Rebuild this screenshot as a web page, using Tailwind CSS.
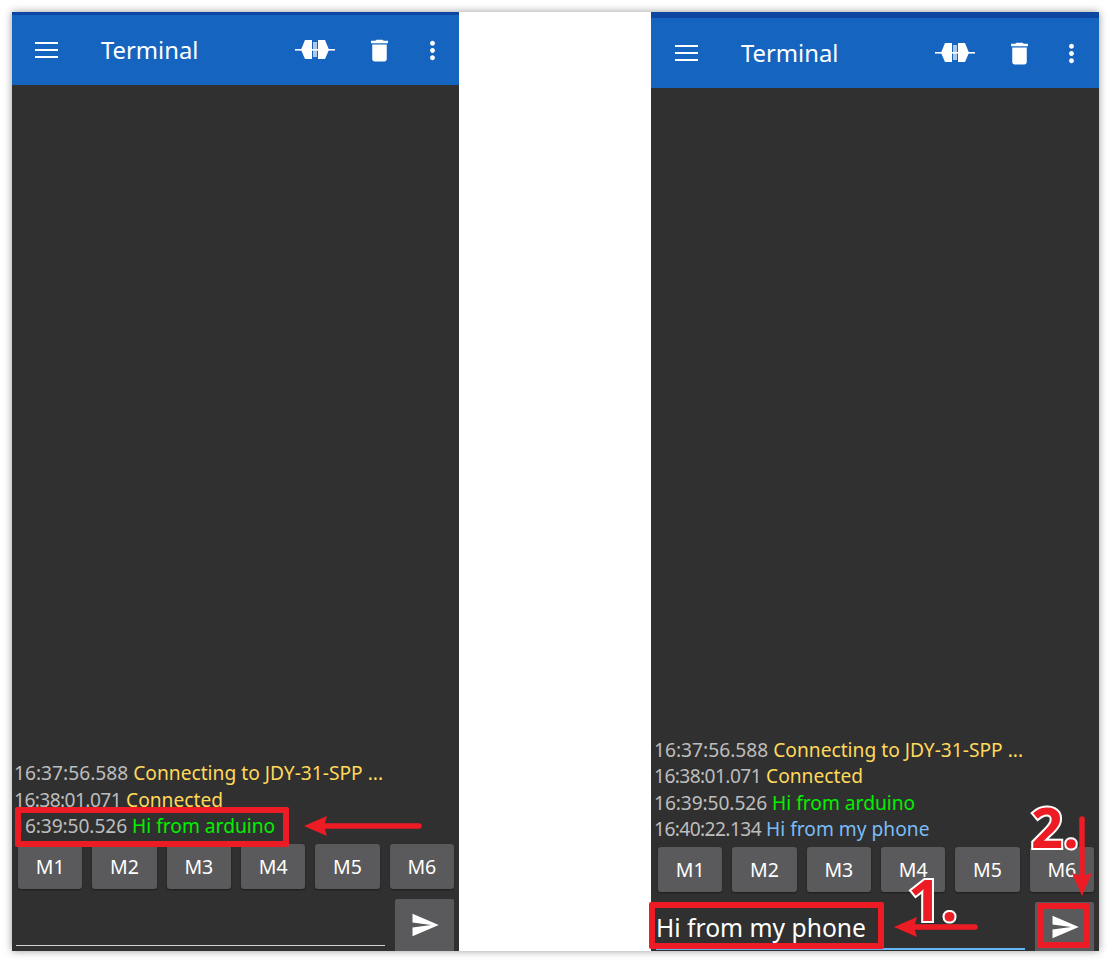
<!DOCTYPE html>
<html lang="en">

<head>
    <meta charset="UTF-8">
    <meta name="viewport" content="width=device-width, initial-scale=1.0">
    <title>Terminal</title>
    <script src="https://cdn.jsdelivr.net/npm/@tailwindcss/browser@4"></script>
</head>

<body class="bg-white font-['Noto_Sans',sans-serif]">
    <div class="relative w-[1113px] h-[964px] overflow-hidden pt-[12px] pl-[12px]">
        <div class="flex justify-between w-[1087px] h-[939px] bg-white shadow-[0_0_8px_rgba(0,0,0,0.4)]">

            <!-- left phone -->
            <div class="flex flex-col w-[447px] h-full bg-[#303030]">
                <div class="h-[3px] bg-[#0d47a1]"></div>
                <div class="flex items-center h-[70px] bg-[#1565c0] text-white">
                    <svg class="ml-[23px] w-[23px] h-[16px]" viewBox="0 0 23 16" fill="white"><rect y="0" width="23" height="2"/><rect y="7" width="23" height="2"/><rect y="14" width="23" height="2"/></svg>
                    <span class="ml-[43px] mt-[2px] text-[23.8px] leading-none">Terminal</span>
                    <svg class="ml-auto w-[40px] h-[22px]" viewBox="0 0 40 22" fill="white"><rect y="10" width="40" height="1.6"/><path d="M6 10.8 10 1h7v19h-7z"/><path d="M34 10.8 30 1h-7v19h7z"/><rect x="18" y="3" width="4" height="15" opacity="0.65"/></svg>
                    <svg class="ml-[30px] w-[29px] h-[29px]" viewBox="0 0 24 24" fill="white"><path d="M6 19c0 1.1.9 2 2 2h8c1.1 0 2-.9 2-2V7H6v12zM19 4h-3.5l-1-1h-5l-1 1H5v2h14V4z"/></svg>
                    <svg class="ml-[23.5px] mr-[12.5px] w-[29px] h-[29px]" viewBox="0 0 24 24" fill="white"><path d="M12 8c1.1 0 2-.9 2-2s-.9-2-2-2-2 .9-2 2 .9 2 2 2zm0 2c-1.1 0-2 .9-2 2s.9 2 2 2 2-.9 2-2-.9-2-2-2zm0 6c-1.1 0-2 .9-2 2s.9 2 2 2 2-.9 2-2-.9-2-2-2z"/></svg>
                </div>
                <div class="flex-1 flex flex-col justify-end pl-[2px] pb-[4px] text-[19.2px] leading-[26.6px] text-[#bdbdbd] whitespace-nowrap">
                    <p>16:37:56.588 <span class="text-[#ffd95a]">Connecting to JDY-31-SPP ...</span></p>
                    <p><span class="tracking-[-0.6px]">16:38:01.071</span> <span class="text-[#ffd95a]">Connected</span></p>
                    <p><span class="tracking-[-0.1px]">16:39:50.526</span> <span class="text-[#00f000]">Hi from arduino</span></p>
                </div>
                <div class="flex gap-[10px] pl-[6px] pr-[5px] h-[45px]">
                    <button class="flex-1 rounded-[3px] bg-[#5a5a5c] text-white text-[19.5px] shadow-[0_1px_2px_rgba(0,0,0,0.4)]">M1</button>
                    <button class="flex-1 rounded-[3px] bg-[#5a5a5c] text-white text-[19.5px] shadow-[0_1px_2px_rgba(0,0,0,0.4)]">M2</button>
                    <button class="flex-1 rounded-[3px] bg-[#5a5a5c] text-white text-[19.5px] shadow-[0_1px_2px_rgba(0,0,0,0.4)]">M3</button>
                    <button class="flex-1 rounded-[3px] bg-[#5a5a5c] text-white text-[19.5px] shadow-[0_1px_2px_rgba(0,0,0,0.4)]">M4</button>
                    <button class="flex-1 rounded-[3px] bg-[#5a5a5c] text-white text-[19.5px] shadow-[0_1px_2px_rgba(0,0,0,0.4)]">M5</button>
                    <button class="flex-1 rounded-[3px] bg-[#5a5a5c] text-white text-[19.5px] shadow-[0_1px_2px_rgba(0,0,0,0.4)]">M6</button>
                </div>
                <div class="flex items-end h-[52px] mt-[10px] pl-[4px]">
                    <div class="w-[369px] h-[6px] border-t border-[#d0d0d0]"></div>
                    <div class="flex items-center justify-center ml-[10px] w-[59px] h-[52px] rounded-t-[2px] bg-[#5a5a5c]">
                        <svg class="w-[30px] h-[30px]" viewBox="0 0 24 24" fill="white"><path d="M2.01 21 23 12 2.01 3 2 10l15 2-15 2z"/></svg>
                    </div>
                </div>
            </div>

            <!-- right phone -->
            <div class="flex flex-col w-[448px] h-full bg-[#303030]">
                <div class="h-[6px] bg-[#0d47a1]"></div>
                <div class="flex items-center h-[70px] bg-[#1565c0] text-white">
                    <svg class="ml-[24px] w-[23px] h-[16px]" viewBox="0 0 23 16" fill="white"><rect y="0" width="23" height="2"/><rect y="7" width="23" height="2"/><rect y="14" width="23" height="2"/></svg>
                    <span class="ml-[43px] mt-[2px] text-[23.8px] leading-none">Terminal</span>
                    <svg class="ml-auto w-[40px] h-[22px]" viewBox="0 0 40 22" fill="white"><rect y="10" width="40" height="1.6"/><path d="M6 10.8 10 1h7v19h-7z"/><path d="M34 10.8 30 1h-7v19h7z"/><rect x="18" y="3" width="4" height="15" opacity="0.65"/></svg>
                    <svg class="ml-[30px] w-[29px] h-[29px]" viewBox="0 0 24 24" fill="white"><path d="M6 19c0 1.1.9 2 2 2h8c1.1 0 2-.9 2-2V7H6v12zM19 4h-3.5l-1-1h-5l-1 1H5v2h14V4z"/></svg>
                    <svg class="ml-[23.5px] mr-[13px] w-[29px] h-[29px]" viewBox="0 0 24 24" fill="white"><path d="M12 8c1.1 0 2-.9 2-2s-.9-2-2-2-2 .9-2 2 .9 2 2 2zm0 2c-1.1 0-2 .9-2 2s.9 2 2 2 2-.9 2-2-.9-2-2-2zm0 6c-1.1 0-2 .9-2 2s.9 2 2 2 2-.9 2-2-.9-2-2-2z"/></svg>
                </div>
                <div class="flex-1 flex flex-col justify-end pl-[3px] pb-[4px] text-[19.2px] leading-[26.6px] text-[#bdbdbd] whitespace-nowrap">
                    <p>16:37:56.588 <span class="text-[#ffd95a]">Connecting to JDY-31-SPP ...</span></p>
                    <p><span class="tracking-[-0.6px]">16:38:01.071</span> <span class="text-[#ffd95a]">Connected</span></p>
                    <p><span class="tracking-[-0.1px]">16:39:50.526</span> <span class="text-[#00f000]">Hi from arduino</span></p>
                    <p><span class="tracking-[-0.6px]">16:40:22.134</span> <span class="text-[#7abcf5]">Hi from my phone</span></p>
                </div>
                <div class="flex gap-[10px] pl-[7px] pr-[5px] h-[45px]">
                    <button class="flex-1 rounded-[3px] bg-[#5a5a5c] text-white text-[19.5px] shadow-[0_1px_2px_rgba(0,0,0,0.4)]">M1</button>
                    <button class="flex-1 rounded-[3px] bg-[#5a5a5c] text-white text-[19.5px] shadow-[0_1px_2px_rgba(0,0,0,0.4)]">M2</button>
                    <button class="flex-1 rounded-[3px] bg-[#5a5a5c] text-white text-[19.5px] shadow-[0_1px_2px_rgba(0,0,0,0.4)]">M3</button>
                    <button class="flex-1 rounded-[3px] bg-[#5a5a5c] text-white text-[19.5px] shadow-[0_1px_2px_rgba(0,0,0,0.4)]">M4</button>
                    <button class="flex-1 rounded-[3px] bg-[#5a5a5c] text-white text-[19.5px] shadow-[0_1px_2px_rgba(0,0,0,0.4)]">M5</button>
                    <button class="flex-1 rounded-[3px] bg-[#5a5a5c] text-white text-[19.5px] shadow-[0_1px_2px_rgba(0,0,0,0.4)]">M6</button>
                </div>
                <div class="flex items-end h-[49px] mt-[10px] pl-[5px]">
                    <div class="flex flex-col justify-end w-[369px] h-full">
                        <span class="pb-[5px] text-[24.65px] leading-[30px] text-white whitespace-nowrap">Hi from my phone</span>
                        <div class="h-[2px] mb-[1px] bg-[#64b5f6]"></div>
                    </div>
                    <div class="flex items-center justify-center ml-[10px] w-[59px] h-[49px] rounded-t-[2px] bg-[#5a5a5c]">
                        <svg class="w-[30px] h-[30px]" viewBox="0 0 24 24" fill="white"><path d="M2.01 21 23 12 2.01 3 2 10l15 2-15 2z"/></svg>
                    </div>
                </div>
            </div>
        </div>

        <!-- red annotations drawn over the screenshots -->
        <div class="absolute left-[15px] top-[807px] w-[274px] h-[40px] rounded-[2px] border-[6px] border-[#ed1c24]"></div>
        <div class="absolute left-[649px] top-[902px] w-[235px] h-[47px] rounded-[2px] border-[6px] border-[#ed1c24]"></div>
        <div class="absolute left-[1037px] top-[903px] w-[53px] h-[45px] rounded-[2px] border-[6px] border-[#ed1c24]"></div>
        <svg class="absolute left-0 top-0 w-[1113px] h-[964px] pointer-events-none" viewBox="0 0 1113 964">
            <g fill="#ed1c24" stroke="#ed1c24">
                <path d="M320 826H419" stroke-width="5.5" stroke-linecap="round"/>
                <path d="M304 826 327 816 324 826 327 836z" stroke="none"/>
                <path d="M910 927H975" stroke-width="5.5" stroke-linecap="round"/>
                <path d="M894 927 917 917 914 927 917 937z" stroke="none"/>
                <path d="M1082 819V880" stroke-width="5.5" stroke-linecap="round"/>
                <path d="M1082 896 1072 873 1082 876 1092 873z" stroke="none"/>
            </g>
        </svg>
        <span class="absolute left-[908px] top-[870px] text-[58px] leading-none font-bold text-[#ed1c24] font-['Open_Sans',sans-serif] [-webkit-text-stroke:4px_white] [paint-order:stroke_fill]">1.</span>
        <span class="absolute left-[1031px] top-[798px] text-[56px] leading-none font-bold text-[#ed1c24] font-['Open_Sans',sans-serif] [-webkit-text-stroke:4px_white] [paint-order:stroke_fill]">2.</span>
    </div>
</body>

</html>
